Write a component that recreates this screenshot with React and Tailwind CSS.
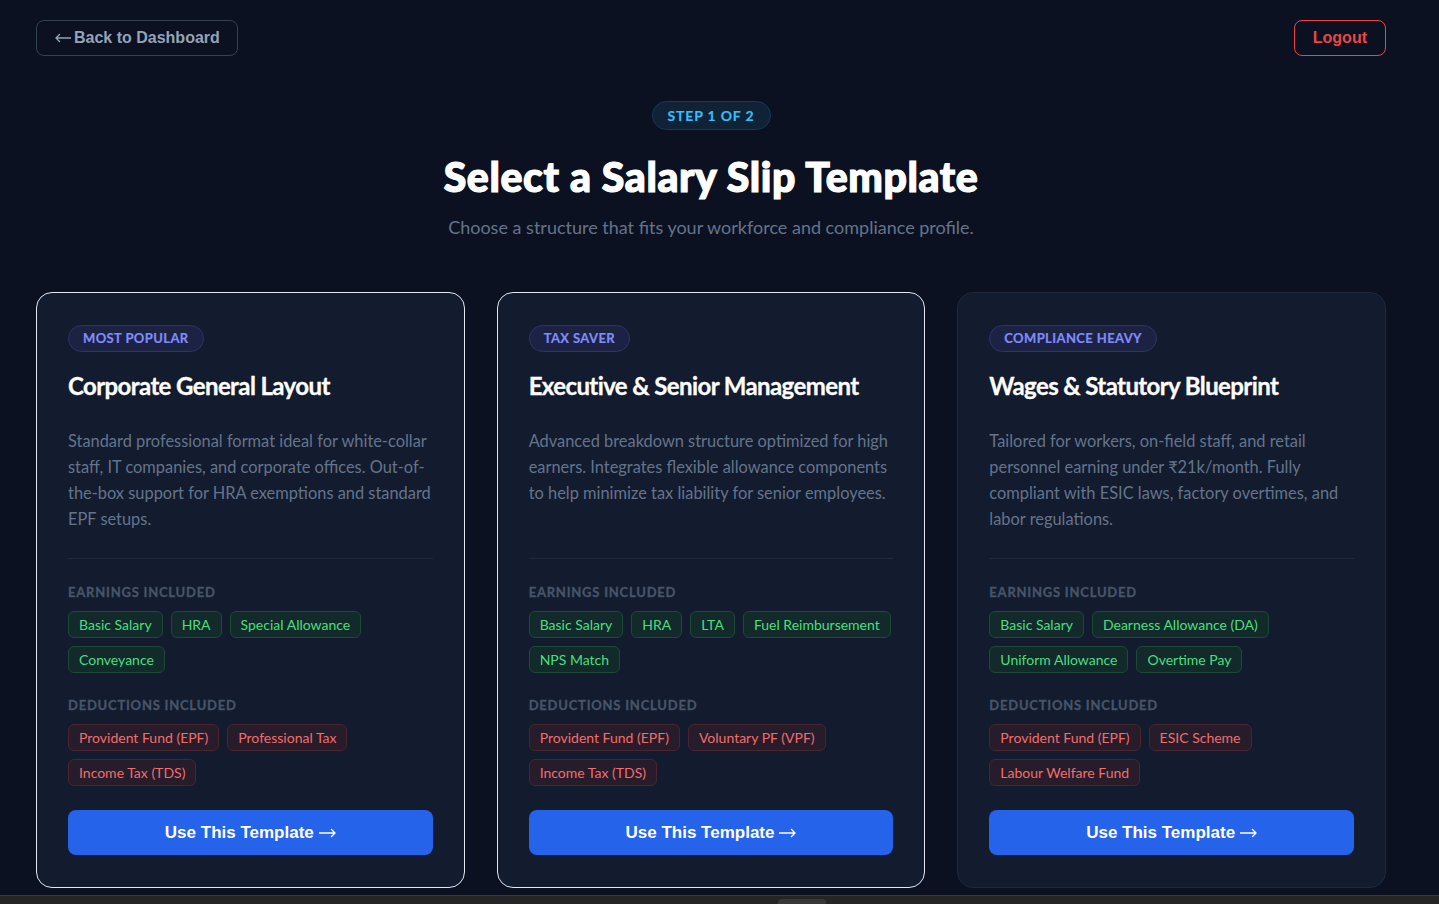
import React from "react";

const templates = [
  {
    badge: "Most Popular",
    title: "Corporate General Layout",
    desc: "Standard professional format ideal for white-collar staff, IT companies, and corporate offices. Out-of-the-box support for HRA exemptions and standard EPF setups.",
    earnings: ["Basic Salary", "HRA", "Special Allowance", "Conveyance"],
    deductions: ["Provident Fund (EPF)", "Professional Tax", "Income Tax (TDS)"],
    active: true,
  },
  {
    badge: "Tax Saver",
    title: "Executive & Senior Management",
    desc: "Advanced breakdown structure optimized for high earners. Integrates flexible allowance components to help minimize tax liability for senior employees.",
    earnings: ["Basic Salary", "HRA", "LTA", "Fuel Reimbursement", "NPS Match"],
    deductions: ["Provident Fund (EPF)", "Voluntary PF (VPF)", "Income Tax (TDS)"],
    active: true,
  },
  {
    badge: "Compliance Heavy",
    title: "Wages & Statutory Blueprint",
    desc: "Tailored for workers, on-field staff, and retail personnel earning under ₹21k/month. Fully compliant with ESIC laws, factory overtimes, and labor regulations.",
    earnings: ["Basic Salary", "Dearness Allowance (DA)", "Uniform Allowance", "Overtime Pay"],
    deductions: ["Provident Fund (EPF)", "ESIC Scheme", "Labour Welfare Fund"],
    active: false,
  },
];

const body = { fontFamily: "Lato, 'Noto Sans', sans-serif" };
const arial = { fontFamily: "'Liberation Sans', Arial, sans-serif" };

// Thin long arrow, as drawn by the system font next to button labels
function Arrow({ dir, w = 16 }) {
  const d =
    dir === "left"
      ? `M1 5 H${w} M4.5 1.6 L1 5 L4.5 8.4`
      : `M0 5 H${w - 1} M${w - 4.5} 1.6 L${w - 1} 5 L${w - 4.5} 8.4`;
  return (
    <svg width={w} height="10" viewBox={`0 0 ${w} 10`} fill="none" className="shrink-0">
      <path d={d} stroke="currentColor" strokeWidth="1.4" strokeLinecap="round" strokeLinejoin="round" />
    </svg>
  );
}

function Tag({ children, kind }) {
  const cls =
    kind === "earn"
      ? "border-[#1c4a37] bg-[#132a2b] text-[#4ade80]"
      : "border-[#4a2430] bg-[#271c2a] text-[#f26d6d]";
  return (
    <span className={`inline-flex h-[27px] items-center rounded-md border px-2.5 text-[14px] ${cls}`}>
      {children}
    </span>
  );
}

function Card({ t }) {
  return (
    <div
      className={`flex flex-col rounded-2xl border bg-[#131b2e] px-[31px] pt-8 pb-8 ${
        t.active ? "border-[#e2e8f0]" : "border-[#1e293b]"
      }`}
      style={body}
    >
      <div>
        <span className="inline-flex h-[27px] items-center rounded-full border border-[#2e3566] bg-[#1b2243] px-[14px] text-[13px] font-bold uppercase tracking-[0.03em] text-[#818cf8] [-webkit-text-stroke:0.2px_#818cf8]">
          {t.badge}
        </span>
      </div>
      <h2 className="mt-5 text-[24px] font-bold leading-7 tracking-tight text-white [-webkit-text-stroke:0.3px_white]">
        {t.title}
      </h2>
      <p className="mt-7 mb-[26px] flex-1 text-[16.4px] leading-[26px] text-[#64748b]">{t.desc}</p>
      <div className="border-t border-[#1e293b] pt-[23px]">
        <div className="mb-[9px] text-[13px] font-bold uppercase leading-5 tracking-[0.06em] text-[#475569] [-webkit-text-stroke:0.3px_#475569]">
          Earnings Included
        </div>
        <div className="flex flex-wrap gap-2">
          {t.earnings.map((e) => (
            <Tag key={e} kind="earn">{e}</Tag>
          ))}
        </div>
        <div className="mt-[22px] mb-[9px] text-[13px] font-bold uppercase leading-5 tracking-[0.06em] text-[#475569] [-webkit-text-stroke:0.3px_#475569]">
          Deductions Included
        </div>
        <div className="flex flex-wrap gap-2">
          {t.deductions.map((d) => (
            <Tag key={d} kind="ded">{d}</Tag>
          ))}
        </div>
      </div>
      <button
        className="mt-6 flex h-[45px] items-center justify-center gap-[5px] rounded-lg bg-[#2563eb] text-[17px] font-bold text-white"
        style={arial}
      >
        Use This Template <Arrow dir="right" w={17} />
      </button>
    </div>
  );
}

export default function App() {
  return (
    <div className="min-h-screen bg-[#0b1120]">
      <div className="w-[1422px] px-9 pt-5 pb-6">
        <header className="flex items-center justify-between" style={arial}>
          <button className="flex h-9 items-center gap-[3px] rounded-lg border border-[#334155] pl-[18px] pr-[17px] text-[16px] font-bold text-[#94a3b8]">
            <Arrow dir="left" /> Back to Dashboard
          </button>
          <button className="h-9 rounded-lg border border-[#ef4444] px-[18px] text-[16px] font-bold text-[#ef4444]">
            Logout
          </button>
        </header>

        <section className="mt-[45px] flex flex-col items-center" style={body}>
          <span className="inline-flex h-[29px] items-center rounded-full border border-[#173a55] bg-[#0f2236] px-[15px] text-[14px] font-bold uppercase tracking-[0.06em] text-[#38bdf8] [-webkit-text-stroke:0.2px_#38bdf8]">
            Step 1 of 2
          </span>
          <h1 className="mt-[23px] text-[41px] font-black leading-[48px] tracking-[0.015em] text-white [-webkit-text-stroke:1.2px_white]">
            Select a Salary Slip Template
          </h1>
          <p className="mt-3 text-[18px] font-normal leading-7 text-[#64748b]">
            Choose a structure that fits your workforce and compliance profile.
          </p>
        </section>

        <div className="mt-[51px] grid grid-cols-3 gap-8">
          {templates.map((t) => (
            <Card key={t.title} t={t} />
          ))}
        </div>
      </div>

      {/* window status strip along the bottom edge */}
      <div className="fixed bottom-0 left-0 right-0 flex h-[9px] border-t border-[#3a3a3a] bg-[#252525] pl-[778px]">
        <div className="mt-[3px] h-[6px] w-[48px] rounded-t bg-[#383838]" />
      </div>
    </div>
  );
}
